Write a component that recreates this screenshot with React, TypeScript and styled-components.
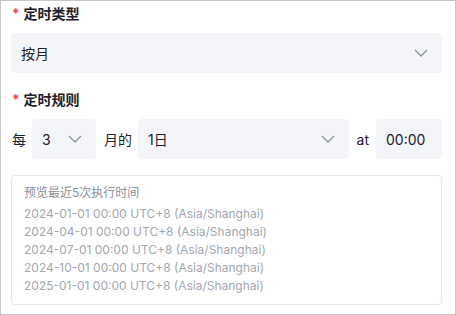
import { FC } from "react";
import styled, { createGlobalStyle } from "styled-components";

const GlobalStyle = createGlobalStyle`
    html, body {
        margin: 0;
        padding: 0;
        background: #ffffff;
    }
    body {
        font-family: Inter, "Noto Sans CJK SC", sans-serif;
        color: #1d2129;
    }
`;

const Frame = styled.div`
    box-sizing: border-box;
    width: 456px;
    height: 315px;
    border: 1px solid #c6c6c6;
    padding: 2px 13px 0 10px;
    display: flex;
    flex-direction: column;
`;

const Label = styled.div<{ $top: number }>`
    display: flex;
    align-items: center;
    gap: 4px;
    margin-top: ${(p) => p.$top}px;
    font-size: 14px;
    line-height: 22px;
    font-weight: 600;
    color: #1d2129;
    padding-left: 1px;
`;

const Star = styled.span`
    color: #f53f3f;
    font-size: 14px;
    font-weight: 600;
`;

const Select = styled.div<{ $width?: number }>`
    box-sizing: border-box;
    display: flex;
    align-items: center;
    justify-content: space-between;
    height: 40px;
    padding: 0 14px 0 10px;
    border-radius: 4px;
    background: #f4f5f8;
    font-size: 14px;
    color: #1d2129;
    width: ${(p) => (p.$width ? `${p.$width}px` : "auto")};
    flex: ${(p) => (p.$width ? "0 0 auto" : "1 1 auto")};
`;

const Field = styled.div<{ $top: number }>`
    margin-top: ${(p) => p.$top}px;
    display: flex;
`;

const Row = styled.div`
    margin-top: 8px;
    display: flex;
    align-items: center;
`;

const Word = styled.span<{ $left: number; $right: number }>`
    font-size: 14px;
    color: #1d2129;
    margin: 0 ${(p) => p.$right}px 0 ${(p) => p.$left}px;
`;

const Preview = styled.div`
    box-sizing: border-box;
    margin-top: 16px;
    border: 1px solid #e5e6eb;
    border-radius: 4px;
    padding: 8px 12px 9px;
    font-size: 12px;
    line-height: 18px;
`;

const PreviewTitle = styled.div`
    color: #8a8f99;
    margin-bottom: 3px;
`;

const PreviewLine = styled.div`
    color: #a3a7ae;
`;

const Chevron: FC = () => (
    <svg width="14" height="8" viewBox="0 0 14 8" fill="none">
        <path d="M1 1l6 6 6-6" stroke="#8c9099" strokeWidth="1.3" />
    </svg>
);

const runs = [
    "2024-01-01 00:00 UTC+8 (Asia/Shanghai)",
    "2024-04-01 00:00 UTC+8 (Asia/Shanghai)",
    "2024-07-01 00:00 UTC+8 (Asia/Shanghai)",
    "2024-10-01 00:00 UTC+8 (Asia/Shanghai)",
    "2025-01-01 00:00 UTC+8 (Asia/Shanghai)",
];

const App: FC = () => {
    return (
        <>
            <GlobalStyle />
            <Frame>
                <Label $top={0}>
                    <Star>*</Star>定时类型
                </Label>
                <Field $top={8}>
                    <Select>
                        <span>按月</span>
                        <Chevron />
                    </Select>
                </Field>
                <Label $top={16}>
                    <Star>*</Star>定时规则
                </Label>
                <Row>
                    <Word $left={1} $right={6}>每</Word>
                    <Select $width={64}>
                        <span>3</span>
                        <Chevron />
                    </Select>
                    <Word $left={8} $right={6}>月的</Word>
                    <Select>
                        <span>1日</span>
                        <Chevron />
                    </Select>
                    <Word $left={8} $right={7}>at</Word>
                    <Select $width={66}>
                        <span>00:00</span>
                    </Select>
                </Row>
                <Preview>
                    <PreviewTitle>预览最近5次执行时间</PreviewTitle>
                    {runs.map((r) => (
                        <PreviewLine key={r}>{r}</PreviewLine>
                    ))}
                </Preview>
            </Frame>
        </>
    );
};

export default App;
